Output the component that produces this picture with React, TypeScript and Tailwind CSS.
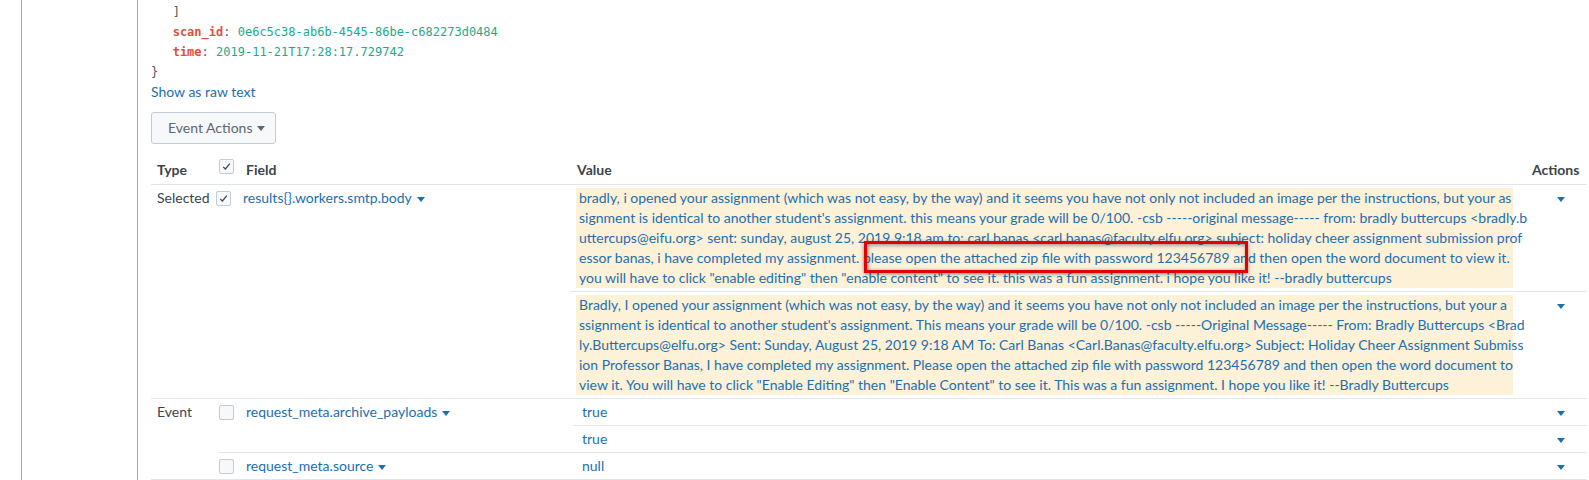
import React from "react";

const block1 = [
  "bradly, i opened your assignment (which was not easy, by the way) and it seems you have not only not included an image per the instructions, but your as",
  "signment is identical to another student's assignment. this means your grade will be 0/100. -csb -----original message----- from: bradly buttercups <bradly.b",
  "uttercups@eifu.org> sent: sunday, august 25, 2019 9:18 am to: carl banas <carl.banas@faculty.elfu.org> subject: holiday cheer assignment submission prof",
  "essor banas, i have completed my assignment. please open the attached zip file with password 123456789 and then open the word document to view it.",
  "you will have to click \"enable editing\" then \"enable content\" to see it. this was a fun assignment. i hope you like it! --bradly buttercups",
];

const block2 = [
  "Bradly, I opened your assignment (which was not easy, by the way) and it seems you have not only not included an image per the instructions, but your a",
  "ssignment is identical to another student's assignment. This means your grade will be 0/100. -csb -----Original Message----- From: Bradly Buttercups <Brad",
  "ly.Buttercups@elfu.org> Sent: Sunday, August 25, 2019 9:18 AM To: Carl Banas <Carl.Banas@faculty.elfu.org> Subject: Holiday Cheer Assignment Submiss",
  "ion Professor Banas, I have completed my assignment. Please open the attached zip file with password 123456789 and then open the word document to",
  "view it. You will have to click \"Enable Editing\" then \"Enable Content\" to see it. This was a fun assignment. I hope you like it! --Bradly Buttercups",
];

function Caret({ color = "#1d6fae" }: { color?: string }) {
  return (
    <svg width="8" height="5" viewBox="0 0 8 5" className="inline-block">
      <path d="M0 0 L8 0 L4 5 Z" fill={color} />
    </svg>
  );
}

function Checkbox({ checked }: { checked?: boolean }) {
  return (
    <div className="w-[15px] h-[15px] rounded-[2px] border border-[#c3cbd4] bg-[#f7f8fa] flex items-center justify-center">
      {checked && (
        <svg width="11" height="11" viewBox="0 0 11 11">
          <path d="M2.2 5.8 L4.4 8 L8.8 2.6" fill="none" stroke="#3c444d" strokeWidth="1.2" />
        </svg>
      )}
    </div>
  );
}

function ValueRow({ children, highlight }: { children: React.ReactNode; highlight?: boolean }) {
  return (
    <div className="flex pt-[3px] pb-[3px]">
      <div className="flex-1 pl-[6px]">
        <div className={highlight ? "bg-[#fdf1d7] pl-[3px] relative w-[937px]" : "pl-[3px]"}>{children}</div>
      </div>
      <div className="w-[74px] pl-[44px] pt-[5px] leading-[10px]">
        <Caret />
      </div>
    </div>
  );
}

export default function App() {
  return (
    <div
      className="flex h-[480px] overflow-hidden bg-white text-[14px] leading-[20px] text-[#3c444d]"
      style={{ fontFamily: "Lato, 'Open Sans', sans-serif" }}
    >
      <div className="w-[21px] shrink-0" />
      <div className="w-[1px] shrink-0 bg-[#6cb6f0]" />
      <div className="w-[115px] shrink-0" />
      <div className="w-[1px] shrink-0 bg-[#6cb6f0]" />
      <div className="w-[13px] shrink-0" />
      <div className="flex-1 min-w-0 flex flex-col">
        <div className="pt-[2px] text-[12px] leading-[20px] text-[#555]" style={{ fontFamily: "'DejaVu Sans Mono', monospace" }}>
          <div className="pl-[3ch]">]</div>
          <div className="pl-[3ch] whitespace-nowrap">
            <span className="font-bold text-[#e0503e]">scan_id</span>: <span className="text-[#1fa88a]">0e6c5c38-ab6b-4545-86be-c682273d0484</span>
          </div>
          <div className="pl-[3ch] whitespace-nowrap">
            <span className="font-bold text-[#e0503e]">time</span>: <span className="text-[#1fa88a]">2019-11-21T17:28:17.729742</span>
          </div>
          <div>{"}"}</div>
        </div>
        <div className="text-[#1d6fae]">Show as raw text</div>
        <div className="mt-[10px]">
          <button className="h-[32px] w-[125px] flex items-center gap-[5px] pl-[16px] rounded-[3px] border border-[#c3cbd4] bg-[#f7f8fa] text-[#5c6773] text-[14px]">
            <span>Event Actions</span>
            <Caret color="#5c6773" />
          </button>
        </div>

        <div className="mr-[2px]">
          {/* header */}
          <div className="flex h-[41px] border-b border-[#e1e6eb] font-bold">
            <div className="w-[68px] pl-[6px] pt-[16px]">Type</div>
            <div className="w-[27px] pt-[15px]">
              <Checkbox checked />
            </div>
            <div className="w-[327px] pt-[16px]">Field</div>
            <div className="flex-1 pl-[4px] pt-[16px]">Value</div>
            <div className="w-[74px] pl-[19px] pt-[16px]">Actions</div>
          </div>

          <div className="divide-y divide-[#e1e6eb] border-b border-[#e1e6eb]">
            {/* Selected group */}
            <div className="flex">
              <div className="w-[68px] pl-[6px] pt-[3px]">Selected</div>
              <div className="flex-1 flex">
                <div className="w-[27px] pt-[6px]">
                  <Checkbox checked />
                </div>
                <div className="w-[327px] pt-[3px] text-[#1d6fae] whitespace-nowrap flex items-start gap-[5px]">
                  <span>results{"{}"}.workers.smtp.body</span>
                  <span className="pt-[7px] leading-[5px]"><Caret /></span>
                </div>
                <div className="flex-1 divide-y divide-[#e1e6eb] text-[#1d6fae]">
                  <ValueRow highlight>
                    {block1.map((l, i) => (
                      <div key={i} className="whitespace-nowrap">{l}</div>
                    ))}
                    <div className="absolute left-[288px] top-[53px] w-[384px] h-[32px] border-[3px] border-[#e30000] shadow-[0_1px_4px_rgba(0,0,0,0.45),inset_1px_1px_4px_rgba(0,0,0,0.45)]" />
                  </ValueRow>
                  <ValueRow highlight>
                    {block2.map((l, i) => (
                      <div key={i} className="whitespace-nowrap">{l}</div>
                    ))}
                  </ValueRow>
                </div>
              </div>
            </div>

            {/* Event group */}
            <div className="flex">
              <div className="w-[68px] pl-[6px] pt-[3px]">Event</div>
              <div className="flex-1 divide-y divide-[#e1e6eb]">
                <div className="flex">
                  <div className="w-[27px] pt-[6px]">
                    <Checkbox />
                  </div>
                  <div className="w-[327px] pt-[3px] text-[#1d6fae] whitespace-nowrap flex items-start gap-[5px]">
                    <span>request_meta.archive_payloads</span>
                    <span className="pt-[7px] leading-[5px]"><Caret /></span>
                  </div>
                  <div className="flex-1 divide-y divide-[#e1e6eb] text-[#1d6fae]">
                    <ValueRow>true</ValueRow>
                    <ValueRow>true</ValueRow>
                  </div>
                </div>
                <div className="flex">
                  <div className="w-[27px] pt-[6px]">
                    <Checkbox />
                  </div>
                  <div className="w-[327px] pt-[3px] text-[#1d6fae] whitespace-nowrap flex items-start gap-[5px]">
                    <span>request_meta.source</span>
                    <span className="pt-[7px] leading-[5px]"><Caret /></span>
                  </div>
                  <div className="flex-1 divide-y divide-[#e1e6eb] text-[#1d6fae]">
                    <ValueRow>null</ValueRow>
                  </div>
                </div>
              </div>
            </div>
          </div>
        </div>
      </div>
    </div>
  );
}
